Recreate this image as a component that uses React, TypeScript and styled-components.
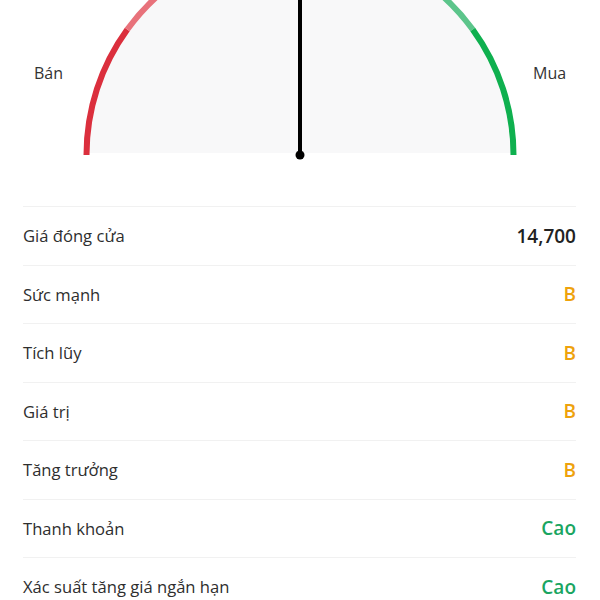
import React from "react";
import styled, { createGlobalStyle } from "styled-components";

const GlobalStyle = createGlobalStyle`
  html, body {
    margin: 0;
    padding: 0;
    background: #ffffff;
    font-family: "Open Sans", "Noto Sans", Arial, sans-serif;
    color: #333333;
  }
`;

const Page = styled.div`
  width: 600px;
  height: 600px;
  overflow: hidden;
  background: #ffffff;
`;

const GaugeWrap = styled.section`
  display: grid;
  grid-template-columns: 1fr 440px 1fr;
  align-items: start;
  height: 206px;
`;

const SideLabel = styled.span<{ $side: "left" | "right" }>`
  margin-top: 61px;
  justify-self: ${(p) => (p.$side === "left" ? "end" : "start")};
  margin-right: ${(p) => (p.$side === "left" ? "17px" : "0")};
  margin-left: ${(p) => (p.$side === "right" ? "13px" : "0")};
  font-size: 16px;
  line-height: 24px;
  color: #333333;
`;

const GaugeSvg = styled.svg`
  display: block;
  width: 440px;
  height: 160px;
`;

const List = styled.div`
  padding: 0 24px 0 23px;
`;

const Row = styled.div`
  display: flex;
  align-items: center;
  justify-content: space-between;
  height: 58.5px;
  box-sizing: border-box;
  border-top: 1px solid #f1f1f1;
`;

const Label = styled.span`
  font-size: 16.6px;
  color: #2e2e2e;
`;

type Tone = "dark" | "amber" | "green";

const toneColor: Record<Tone, string> = {
  dark: "#222222",
  amber: "#eea20c",
  green: "#1aa561",
};

const Value = styled.span<{ $tone: Tone }>`
  font-size: 19px;
  font-weight: 600;
  color: ${(p) => toneColor[p.$tone]};
`;

// gauge geometry, in svg coordinates (svg starts at page x = 80)
const CX = 220;
const CY = 155;
const R = 213.5;

const point = (deg: number) => {
  const a = (deg * Math.PI) / 180;
  return [CX - R * Math.cos(a), CY - R * Math.sin(a)];
};

const arc = (from: number, to: number) => {
  const [x1, y1] = point(from);
  const [x2, y2] = point(to);
  return `M ${x1} ${y1} A ${R} ${R} 0 0 1 ${x2} ${y2}`;
};

const segments = [
  { from: 0, to: 36, color: "#db2f3d" },
  { from: 36, to: 72, color: "#e8727b" },
  { from: 72, to: 108, color: "#d9d9d9" },
  { from: 108, to: 144, color: "#5cc58b" },
  { from: 144, to: 180, color: "#0fb04f" },
];

const rows: { label: string; value: string; tone: Tone }[] = [
  { label: "Giá đóng cửa", value: "14,700", tone: "dark" },
  { label: "Sức mạnh", value: "B", tone: "amber" },
  { label: "Tích lũy", value: "B", tone: "amber" },
  { label: "Giá trị", value: "B", tone: "amber" },
  { label: "Tăng trưởng", value: "B", tone: "amber" },
  { label: "Thanh khoản", value: "Cao", tone: "green" },
  { label: "Xác suất tăng giá ngắn hạn", value: "Cao", tone: "green" },
];

const Gauge = () => (
  <GaugeSvg viewBox="0 0 440 160">
    <path
      d={`M ${CX - R + 3} ${CY - 2} A ${R - 3} ${R - 3} 0 0 1 ${CX + R - 3} ${CY - 2} Z`}
      fill="#f8f8f9"
    />
    {segments.map((s) => (
      <path key={s.from} d={arc(s.from, s.to)} stroke={s.color} strokeWidth={6} fill="none" />
    ))}
    <line x1={CX} y1={CY} x2={CX} y2={-80} stroke="#000000" strokeWidth={4} />
    <circle cx={CX} cy={CY} r={4.5} fill="#000000" />
  </GaugeSvg>
);

export default function App() {
  return (
    <Page>
      <GlobalStyle />
      <GaugeWrap>
        <SideLabel $side="left">Bán</SideLabel>
        <Gauge />
        <SideLabel $side="right">Mua</SideLabel>
      </GaugeWrap>
      <List>
        {rows.map((r) => (
          <Row key={r.label}>
            <Label>{r.label}</Label>
            <Value $tone={r.tone}>{r.value}</Value>
          </Row>
        ))}
      </List>
    </Page>
  );
}
